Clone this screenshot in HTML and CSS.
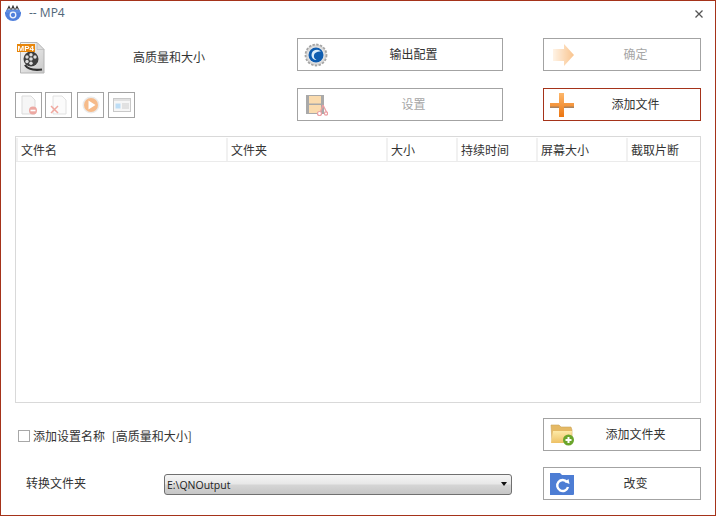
FILE: index.html
```html
<!DOCTYPE html>
<html lang="zh">
<head>
<meta charset="utf-8">
<title>MP4</title>
<link rel="stylesheet" href="styles.css">
</head>
<body>
<div class="window">
  <header class="titlebar">
    <svg class="app-icon" viewBox="0 0 16 16" width="16" height="16">
      <path d="M0 7h16v1.500a8 7.500 0 0 1-16 0z" fill="#4f7fdc"/>
      <path d="M.5 8c0-1.500.5-2.500 1-3.500h13c.5 1 1 2 1 3.500z" fill="#5d8be0"/>
      <path d="M2.500 4.500L4 1.500l1.500 3M6.500 4.500L8 1l1.500 3.500M10.500 4.500L12 1.500l1.500 3" fill="none" stroke="#333" stroke-width="1.100"/>
      <circle cx="8" cy="10" r="2.800" fill="none" stroke="#eef3fc" stroke-width="1.300"/>
    </svg>
    <span class="title">-- MP4</span>
    <svg class="close" viewBox="0 0 8 8" width="8" height="8"><path d="M.5.500l7 7M7.500.500l-7 7" stroke="#555" stroke-width="1.300"/></svg>
  </header>

  <main class="content">
    <section class="top">
      <div class="preset">
        <svg class="mp4" viewBox="0 0 28 32" width="28" height="32">
          <defs>
            <linearGradient id="doc" x1="0" y1="0" x2="1" y2="1"><stop offset="0" stop-color="#fafafa"/><stop offset="1" stop-color="#c8c8c8"/></linearGradient>
          </defs>
          <path d="M3.500.500H20L27 7.500V31H3.500z" fill="url(#doc)" stroke="#b4b4b4"/>
          <path d="M20 .5v7h7z" fill="#dcdcdc" stroke="#b4b4b4" stroke-width=".6"/>
          <circle cx="14" cy="17" r="7.500" fill="#3f3f3f"/>
          <circle cx="14" cy="17" r="1.800" fill="#ddd"/>
          <circle cx="14" cy="12.800" r="1.700" fill="#ddd"/>
          <circle cx="14" cy="21.200" r="1.700" fill="#ddd"/>
          <circle cx="10" cy="15" r="1.700" fill="#ddd"/>
          <circle cx="18" cy="15" r="1.700" fill="#ddd"/>
          <circle cx="10" cy="19.500" r="1.700" fill="#ddd"/>
          <path d="M8 23c3 4.500 9 5.500 17 4.500" fill="none" stroke="#2f2f2f" stroke-width="2.200"/>
          <rect x="0" y="2" width="18" height="8" fill="#e8860a"/>
          <text class="badge" x=".5" y="9">MP4</text>
        </svg>
        <span class="preset-name">高质量和大小</span>
      </div>

      <button class="btn" type="button">
        <svg class="btn-icon" viewBox="0 0 24 24" width="24" height="24">
          <circle cx="12" cy="12" r="10.500" fill="#d8d8d8" stroke="#a5a5a5" stroke-width="1.800" stroke-dasharray="2.400 1.400"/>
          <circle cx="12" cy="12" r="8.500" fill="#e4e4e4"/>
          <circle cx="12" cy="12" r="7.500" fill="#0f5db0"/>
          <path d="M17 8.500a5.500 5.500 0 0 0-9.500 3.500c0 3 2.500 5 5 5c-2-1-3-3-2.500-5c.5-2.500 4-4 7-3.500z" fill="#d9ecfa"/>
        </svg>
        <span class="btn-label">输出配置</span>
      </button>

      <button class="btn btn-disabled" type="button">
        <svg class="btn-icon" viewBox="0 0 24 24" width="24" height="24">
          <defs><linearGradient id="arrow" x1="0" y1="0" x2="1" y2="0"><stop offset="0" stop-color="#ffe9cf"/><stop offset="1" stop-color="#f58a1f"/></linearGradient></defs>
          <path d="M3 6h11V1l10 11-10 11v-5H3z" fill="url(#arrow)"/>
        </svg>
        <span class="btn-label">确定</span>
      </button>

      <div class="tools">
        <button class="tool" type="button">
          <svg viewBox="0 0 18 20" width="18" height="20">
            <path d="M2 1h9l4 4v14H2z" fill="#f4f4f4" stroke="#cfcfcf"/>
            <circle cx="13" cy="15.500" r="4" fill="#e78b83"/>
            <rect x="10.500" y="14.700" width="5" height="1.600" fill="#fff"/>
          </svg>
        </button>
        <button class="tool" type="button">
          <svg viewBox="0 0 18 20" width="18" height="20">
            <path d="M3 1h9l4 4v14H3z" fill="#fafafa" stroke="#d8d8d8"/>
            <path d="M1 11l7 7M8 11l-7 7" stroke="#ec8b80" stroke-width="1.500"/>
          </svg>
        </button>
        <button class="tool tool-gap" type="button">
          <svg viewBox="0 0 18 18" width="18" height="18">
            <circle cx="9" cy="9" r="8.500" fill="#e5e5e5"/>
            <circle cx="9" cy="9" r="7" fill="#f4a564"/>
            <path d="M6.500 4.500l7 4.500-7 4.500z" fill="#fff"/>
          </svg>
        </button>
        <button class="tool" type="button">
          <svg viewBox="0 0 18 14" width="18" height="14">
            <rect x=".5" y=".5" width="17" height="13" fill="#f4f4f4" stroke="#b8b8b8"/>
            <rect x="1" y="1" width="16" height="2" fill="#d8d8d8"/>
            <rect x="2.500" y="5.500" width="5" height="5" fill="#a8d2f2"/>
            <path d="M9 6h7M9 8h7M9 10h7" stroke="#bdbdbd"/>
          </svg>
        </button>
      </div>

      <button class="btn btn-disabled" type="button">
        <svg class="btn-icon" viewBox="0 0 24 24" width="24" height="24">
          <rect x="2" y="2" width="18" height="19" fill="#555"/>
          <rect x="5" y="3" width="12" height="7.500" fill="#f7b95f"/>
          <rect x="5" y="12" width="12" height="8" fill="#f7b95f"/>
          <path d="M16 20l3-8M23 20l-4-8" stroke="#d9434b" stroke-width="1.300"/>
          <circle cx="15.500" cy="20.500" r="2" fill="#fff" stroke="#d9434b" stroke-width="1.200"/>
          <circle cx="22" cy="20.500" r="1.600" fill="#fff" stroke="#d9434b" stroke-width="1.200"/>
        </svg>
        <span class="btn-label">设置</span>
      </button>

      <button class="btn btn-active" type="button">
        <svg class="btn-icon" viewBox="0 0 24 24" width="24" height="24">
          <defs><linearGradient id="plus" x1="0" y1="0" x2="0" y2="1"><stop offset="0" stop-color="#fdb76b"/><stop offset="1" stop-color="#ec7510"/></linearGradient></defs>
          <path d="M9 0h5v10h10v5H14v9H9v-9H0v-5h9z" fill="url(#plus)"/>
          <path d="M0 15h9v-1.500H0zM14 15h10v-1.500H14z" fill="#a9825e"/>
        </svg>
        <span class="btn-label">添加文件</span>
      </button>
    </section>

    <section class="table">
      <div class="thead">
        <div class="th">文件名</div>
        <div class="th">文件夹</div>
        <div class="th">大小</div>
        <div class="th">持续时间</div>
        <div class="th">屏幕大小</div>
        <div class="th">截取片断</div>
      </div>
    </section>

    <section class="bottom">
      <label class="check-row">
        <span class="checkbox"></span>
        <span class="check-text">添加设置名称 [高质量和大小]</span>
      </label>
      <button class="btn" type="button">
        <svg class="btn-icon" viewBox="0 0 24 24" width="24" height="24">
          <defs><linearGradient id="folder" x1="0" y1="0" x2="0" y2="1"><stop offset="0" stop-color="#fdeaa8"/><stop offset="1" stop-color="#eec165"/></linearGradient></defs>
          <path d="M1 2h8l2 2h10l1 3v12H2z" fill="#e5b964" stroke="#c9a55c" stroke-width=".6"/>
          <path d="M3 8h19l-1 12H1z" fill="url(#folder)"/>
          <circle cx="18.500" cy="17" r="5.500" fill="#6aa52c"/>
          <path d="M18.500 14v6M15.500 17h6" stroke="#fff" stroke-width="2"/>
        </svg>
        <span class="btn-label">添加文件夹</span>
      </button>

      <div class="folder-row">
        <span class="folder-label">转换文件夹</span>
        <div class="select">
          <span class="select-value">E:\QNOutput</span>
          <span class="select-arrow"></span>
        </div>
      </div>
      <button class="btn" type="button">
        <svg class="btn-icon" viewBox="0 0 24 24" width="24" height="24">
          <path d="M0 1h10l2 2h12v19a1 1 0 0 1-1 1H0z" fill="#4d7dd4"/>
          <path d="M17 10a5.500 5.500 0 1 0 1 5" fill="none" stroke="#fff" stroke-width="2.400"/>
          <path d="M14.500 10l4-3 1 5z" fill="#fff"/>
        </svg>
        <span class="btn-label">改变</span>
      </button>
    </section>
  </main>
</div>
</body>
</html>
```

FILE: styles.css
```css
* { box-sizing: border-box; }

html, body {
  margin: 0;
  padding: 0;
}

body {
  width: 716px;
  height: 516px;
  overflow: hidden;
  background: #fff;
  font-family: "Noto Sans CJK SC", "Liberation Sans", sans-serif;
  font-size: 12px;
  color: #333;
}

.window {
  width: 716px;
  height: 516px;
  border: 1px solid #a5331a;
  display: flex;
  flex-direction: column;
  background: #fff;
}

.titlebar {
  height: 37px;
  flex: none;
  display: flex;
  align-items: flex-start;
  padding: 4px 12px 0 4px;
}

.app-icon { flex: none; }

.title {
  margin-left: 8px;
  font-family: "Open Sans", "Liberation Sans", sans-serif;
  font-size: 12px;
  line-height: 16px;
  color: #4f6678;
}

.close {
  margin-left: auto;
  margin-top: 5px;
}

.content {
  flex: 1;
  padding: 0 14px;
  display: flex;
  flex-direction: column;
}

.top {
  display: grid;
  grid-template-columns: 242px 206px 158px;
  grid-template-rows: 33px 33px;
  column-gap: 40px;
  row-gap: 17px;
}

.preset {
  display: flex;
  align-items: center;
  padding: 3px 0 0 2px;
  height: 36px;
}

.mp4, .btn-icon, .tool svg { filter: blur(.35px); }

.tool svg { opacity: .75; }

.mp4 { flex: none; }

.preset-name {
  margin-left: 88px;
  margin-bottom: 2px;
  line-height: 16px;
}

.badge {
  font-family: "Liberation Sans", sans-serif;
  font-size: 8px;
  font-weight: 700;
  fill: #fff;
}

.btn {
  display: flex;
  align-items: center;
  padding: 0 0 0 6px;
  margin: 0;
  height: 33px;
  background: #fff;
  border: 1px solid #a3a3a3;
  font: inherit;
  color: #333;
}

.btn-icon {
  flex: none;
  margin-right: -2px;
}

.btn-label {
  flex: 1;
  text-align: center;
  line-height: 16px;
  padding-bottom: 2px;
  padding-right: 1px;
}

.btn-disabled { color: #a6a6a6; }
.btn-disabled .btn-icon { opacity: .5; }
.btn-active { border-color: #a5331a; }

.tools {
  display: flex;
  align-items: center;
  gap: 3px;
  padding-top: 1px;
}

.tool {
  width: 27px;
  height: 26px;
  padding: 0;
  margin: 0;
  display: flex;
  align-items: center;
  justify-content: center;
  background: #fff;
  border: 1px solid #a3a3a3;
}

.tool-gap { margin-left: 2px; margin-right: 1px; }

.table {
  height: 267px;
  flex: none;
  margin-top: 15px;
  border: 1px solid #d9d9d9;
  padding-top: 1px;
}

.thead {
  display: grid;
  grid-template-columns: 210px 160px 70px 80px 90px 1fr;
  height: 24px;
  border-bottom: 1px solid #ebebeb;
}

.th {
  border-left: 2px solid #f1f1f1;
  padding-left: 3px;
  line-height: 23px;
  white-space: nowrap;
}

.bottom {
  margin-top: 15px;
  display: grid;
  grid-template-columns: 1fr 158px;
  grid-template-rows: 33px 33px;
  row-gap: 16px;
}

.check-row {
  display: flex;
  align-items: center;
  gap: 3px;
  padding-left: 3px;
  padding-top: 2px;
}

.check-text {
  word-spacing: 4px;
}

.checkbox {
  width: 12px;
  height: 12px;
  border: 1px solid #a8a8a8;
  background: #fff;
  flex: none;
}

.folder-row {
  display: flex;
  align-items: center;
  padding-left: 11px;
}

.folder-label {
  width: 138px;
  flex: none;
  line-height: 16px;
  padding-bottom: 2px;
}

.select {
  width: 348px;
  height: 21px;
  margin-top: 1px;
  border: 1px solid #707070;
  border-radius: 3px;
  background: linear-gradient(#f5f5f5, #e8e8e8 45%, #d4d4d4 55%, #c6c6c6);
  display: flex;
  align-items: center;
  justify-content: space-between;
  padding: 0 4px 0 2px;
}

.select-value {
  font-family: "Open Sans", "Liberation Sans", sans-serif;
  font-size: 10.5px;
  color: #222;
  line-height: 19px;
  padding-top: 2px;
}

.select-arrow {
  width: 0;
  height: 0;
  border-left: 3.500px solid transparent;
  border-right: 3.500px solid transparent;
  border-top: 4px solid #111;
}
```
